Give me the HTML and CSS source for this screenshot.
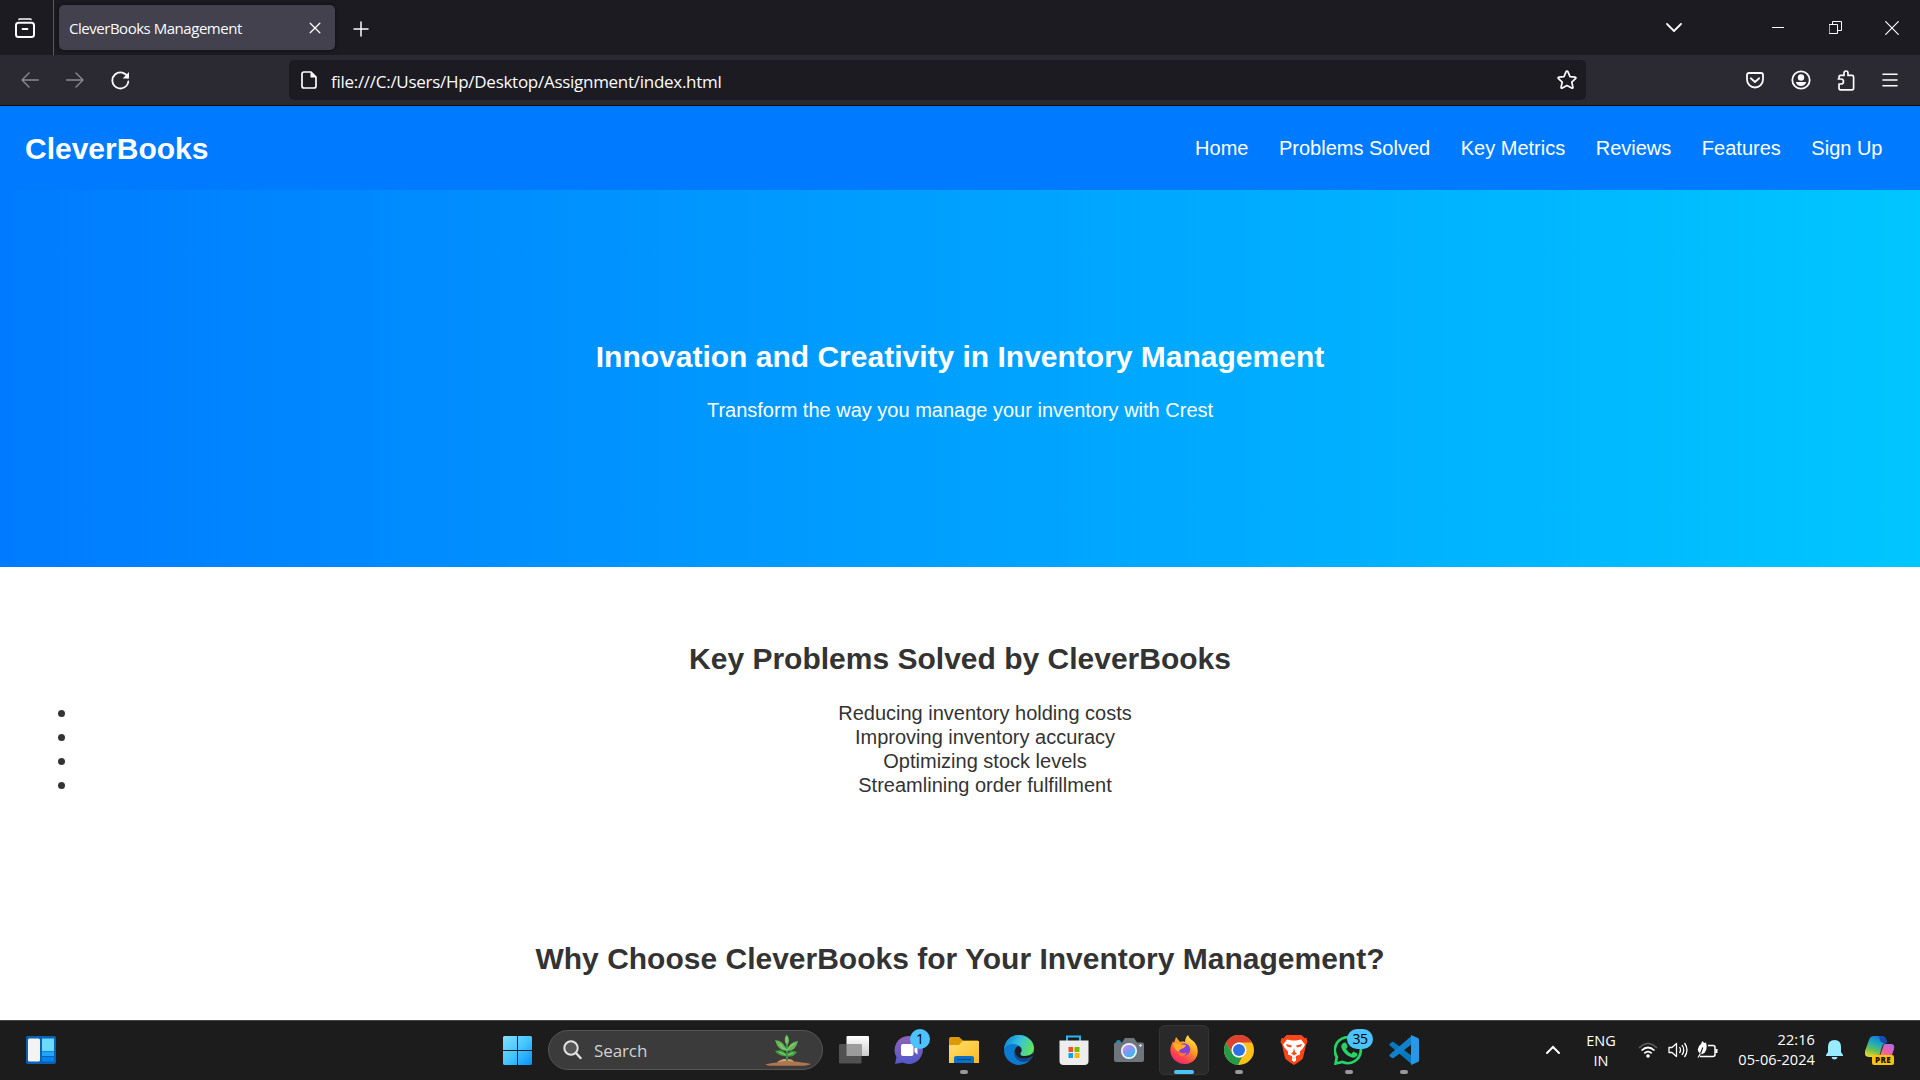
FILE: index.html
```html
<!DOCTYPE html>
<html lang="en">
<head>
<meta charset="utf-8">
<title>CleverBooks Management</title>
<link rel="stylesheet" href="styles.css">
</head>
<body>
<div class="screen">
  <div class="tabbar">
    <div class="tabview"><svg class="ico" width="20" height="20" viewBox="0 0 20 20"><path d="M4 1.5Q4 1 5 1h10q1 0 1 .5" stroke-width="1.6"/><rect x="1" y="4.8" width="18" height="14.2" rx="2.5" stroke-width="2"/><path d="M7.500 11h5" stroke-width="1.8"/></svg></div>
    <div class="tab"><span class="tab-title">CleverBooks Management</span><svg class="ico" width="12" height="12" viewBox="0 0 12 12"><path d="M1.200 1.200l9.600 9.600M10.800 1.200l-9.600 9.600" stroke-width="1.300"/></svg></div>
    <svg class="ico plus" width="16" height="16" viewBox="0 0 16 16"><path d="M8 1v14M1 8h14" stroke-width="1.5"/></svg>
    <div class="window-controls">
      <svg class="ico" width="16" height="10" viewBox="0 0 16 10"><path d="M1 1l7 7 7-7" stroke-width="1.8"/></svg>
      <svg class="ico minimise" width="12" height="12" viewBox="0 0 12 12"><path d="M0 5.500h12" stroke-width="1"/></svg>
      <svg class="ico restore" width="13" height="13" viewBox="0 0 13 13"><path d="M.5 3.500h8v9h-8zM3.500 3.500v-3h9v9h-4" stroke-width="1"/></svg>
      <svg class="ico close" width="14" height="14" viewBox="0 0 14 14"><path d="M.7.7l12.600 12.600M13.300.7L.7 13.300" stroke-width="1.200"/></svg>
    </div>
  </div>
  <div class="toolbar">
    <div class="history">
      <svg class="ico dim" width="18" height="16" viewBox="0 0 18 16"><path d="M17.500 8H1.200M8 1L1 8l7 7" stroke-width="1.400"/></svg>
      <svg class="ico dim" width="18" height="16" viewBox="0 0 18 16"><path d="M.5 8h16.300M10 1l7 7-7 7" stroke-width="1.400"/></svg>
      <svg class="ico" width="19" height="19" viewBox="0 0 19 19"><path d="M16.800 6.500A8 8 0 1 0 17.300 10.500" stroke-width="1.800"/><path d="M18 1v6.500h-6.300z" fill="#fbfbfe" stroke="none"/></svg>
    </div>
    <div class="urlbar">
      <svg class="ico" width="16" height="18" viewBox="0 0 16 18"><path d="M10 1H3Q1 1 1 3v12q0 2 2 2h10q2 0 2-2V6z" stroke-width="1.700"/><path d="M9.500.8V6.500H15.500z" fill="#fbfbfe" stroke="none"/></svg>
      <span class="url">file:///C:/Users/Hp/Desktop/Assignment/index.html</span>
      <svg class="ico star" width="20" height="20" viewBox="0 0 20 20"><path d="M10 1.200q.7 0 1 .7l2 4.700 5 .5q1.600.3.500 1.600l-3.700 3.500 1.100 4.900q.2 1.600-1.200 1l-4.700-2.500-4.700 2.500q-1.400.6-1.200-1l1.100-4.900L1.500 8.700Q.4 7.400 2 7.100l5-.5 2-4.700q.3-.7 1-.7z" stroke-width="1.700"/></svg>
    </div>
    <div class="actions">
      <svg class="ico" width="18" height="17" viewBox="0 0 18 17"><path d="M3 1h12q2 0 2 2v4.500a8 8 0 0 1-16 0V3q0-2 2-2z" stroke-width="1.800"/><path d="M4.800 6.300L9 10l4.200-3.700" stroke-width="1.800"/></svg>
      <svg class="ico" width="20" height="20" viewBox="0 0 20 20"><circle cx="10" cy="10" r="8.700" stroke-width="1.800"/><circle cx="10" cy="7.500" r="3.200" fill="#fbfbfe" stroke="none"/><path d="M4.800 12h10.400q-1 4-5.200 4t-5.200-4z" fill="#fbfbfe" stroke="none"/></svg>
      <svg class="ico" width="18" height="21" viewBox="0 0 18 21"><path d="M2 9V7q0-1.600 1.600-1.600H7V3.200q0-2.200 2-2.200t2 2.200v2.200h4q1.600 0 1.600 1.600v11q0 1.800-1.600 1.800H3.500Q2 19.800 2 18v-4h2q2.500 0 2.500-2.500T4 9H1.300z" stroke-width="1.700"/></svg>
      <svg class="ico" width="16" height="14" viewBox="0 0 16 14"><path d="M1 1.300h14M1 7h14M1 12.700h14" stroke-width="1.600"/></svg>
    </div>
  </div>

  <main class="page">
    <header class="site-header">
      <div class="brand">CleverBooks</div>
      <nav class="nav"><a>Home</a><a>Problems Solved</a><a>Key Metrics</a><a>Reviews</a><a>Features</a><a>Sign Up</a></nav>
    </header>
    <section class="hero">
      <h2>Innovation and Creativity in Inventory Management</h2>
      <p>Transform the way you manage your inventory with Crest</p>
    </section>
    <section class="block">
      <h2>Key Problems Solved by CleverBooks</h2>
      <ul>
        <li>Reducing inventory holding costs</li>
        <li>Improving inventory accuracy</li>
        <li>Optimizing stock levels</li>
        <li>Streamlining order fulfillment</li>
      </ul>
    </section>
    <section class="block">
      <h2>Why Choose CleverBooks for Your Inventory Management?</h2>
    </section>
  </main>

  <footer class="taskbar">
    <svg class="widgets" width="30" height="28" viewBox="0 0 30 28"><rect width="30" height="28" rx="2" fill="#0b62b5"/><rect x="2" y="2.500" width="12" height="23" rx="1.500" fill="#f3f3f3"/><path d="M16 2.500h12V15H16z" fill="#69dafd"/><path d="M16 15.500h12v4.500H16z" fill="#20a5fa"/><path d="M16 21h12v4.500H16z" fill="#0583ef"/></svg>
    <svg class="start" width="29" height="29" viewBox="0 0 29 29"><defs><linearGradient id="win" x1="0" y1="0" x2="29" y2="29" gradientUnits="userSpaceOnUse"><stop stop-color="#83dfff"/><stop offset=".5" stop-color="#45c6fd"/><stop offset="1" stop-color="#0791f8"/></linearGradient></defs><path d="M1 0h13v14H0V1zM15 0h13l1 1v13H15zM0 15h14v14H1l-1-1zM15 15h14v13l-1 1H15z" fill="url(#win)"/></svg>
    <div class="search">
      <svg width="19" height="20" viewBox="0 0 19 20"><circle cx="8" cy="8" r="6.700" fill="#555" stroke="#e3e3e3" stroke-width="2"/><path d="M13 13l4.500 5" stroke="#e3e3e3" stroke-width="2.400" stroke-linecap="round"/></svg>
      <span>Search</span>
      <svg class="plant" width="46" height="32" viewBox="0 0 46 32"><path d="M0 30.500q6-1.500 12-2 6-4 9-3 5-1 8 2 7 .5 17 2.500-3 1.800-10 1.800H4z" fill="#b07650"/><path d="M12 28q7-4 10-2.500 4-1 7 2-8-1-17 .5z" fill="#dda27d"/><path d="M22 27V8" stroke="#369644" stroke-width="2" fill="none"/><path d="M21.500 17Q13 17 10 6q10 1 11.500 11zM22 17Q24 8 33 7q-2 10-11 10zM21 10q-3-5 .8-9.500Q26 6 22.500 11z" fill="#67b65a"/><path d="M22 22q-8 1-12-5 9-3 12 5zM22 22q2-7 10-4-4 6-10 4z" fill="#459f45"/><path d="M22 16Q17 15 15 10M22 16q3-5 7-6M21.800 9V3M21 21l-7-3M23 21l5-2" fill="none" stroke="#9ad779" stroke-width=".9"/></svg>
    </div>
    <div class="apps">
      <div class="app"><svg width="30" height="30" viewBox="0 0 30 30"><defs><linearGradient id="tv" x1="0" y1="0" x2="0" y2="1"><stop stop-color="#fff"/><stop offset="1" stop-color="#ccc"/></linearGradient></defs><rect x="7.500" y="1" width="22.500" height="20" rx="1" fill="url(#tv)"/><rect y="9" width="22.500" height="19.500" rx="1" fill="#515151"/><path d="M7.500 9h15v12h-15z" fill="#9c9c9c"/></svg></div>
      <div class="app"><svg width="30" height="30" viewBox="0 0 30 30"><defs><linearGradient id="chat" x1="0" y1="0" x2="0" y2="1"><stop stop-color="#9062b5"/><stop offset="1" stop-color="#5059c9"/></linearGradient></defs><path d="M15 1a14 14 0 1 1-6.500 26.500L1 29l1.500-7A14 14 0 0 1 15 1z" fill="url(#chat)"/><rect x="7" y="9" width="12.500" height="12" rx="2" fill="#fff"/><path d="M20.500 13l3-2.500v9l-3-2.500z" fill="#fff"/></svg><span class="badge">1</span></div>
      <div class="app"><svg width="30" height="30" viewBox="0 0 30 30"><defs><linearGradient id="fold" x1="0" y1="0" x2="1" y2="1"><stop stop-color="#ffe071"/><stop offset="1" stop-color="#fdb91e"/></linearGradient></defs><path d="M0 4q0-2 2-2h8l4 3.500h15V14H0z" fill="#dd9a05"/><path d="M0 10h10l3.500-4H30v22H0z" fill="url(#fold)"/><path d="M5 28v-5q0-2 2-2h16q2 0 2 2v5z" fill="#0871c5"/><path d="M8 24.500h14" stroke="#06488b"/></svg><i class="mark"></i></div>
      <div class="app"><svg width="30" height="30" viewBox="0 0 30 30"><defs><linearGradient id="edge" x1="0" x2="1" y1=".2" y2=".5"><stop stop-color="#0b84d8"/><stop offset=".5" stop-color="#35c1df"/><stop offset="1" stop-color="#62e557"/></linearGradient></defs><circle cx="15" cy="15" r="15" fill="#0b7bd1"/><path d="M0 14C1 5 7 0 15 0s15 6 15 13c0 5-4 8-9 8-4 0-5.500-1.500-4-3.500 2-3 .5-6-3-7.500C9 8 3 9 0 14z" fill="url(#edge)"/><path d="M11 14c-3 7 2 13 9 13 4 0 7-3 8-5q-3 2-7 1.500c-6-.5-10-4-10-9.500z" fill="#114a8b"/><path d="M16.500 18c2-3 .5-6-2-7-3 1-4.500 4-3 7.500 1 3 4 5 9 5 4 0 7-1 8.500-3l.5-3q-3 3.500-9 3.500-5.500 0-4-3z" fill="#1c1c1c"/></svg></div>
      <div class="app"><svg width="30" height="30" viewBox="0 0 30 30"><path d="M8 7V1.500h13V7" fill="none" stroke="#29b6ef" stroke-width="2"/><path d="M.5 5.500h29V26q0 4-4 4h-21q-4 0-4-4z" fill="#ededed"/><path d="M9.500 12H14v5H9.500z" fill="#f25022"/><path d="M15.500 12h5v5h-5z" fill="#7fba00"/><path d="M9.500 18H14v5H9.500z" fill="#00a4ef"/><path d="M15.500 18h5v5h-5z" fill="#ffb900"/></svg></div>
      <div class="app"><svg width="30" height="30" viewBox="0 0 30 30"><defs><linearGradient id="lens" x1="0" y1="0" x2=".7" y2="1"><stop stop-color="#d594f7"/><stop offset=".5" stop-color="#8994f2"/><stop offset="1" stop-color="#26c1ef"/></linearGradient></defs><path d="M2 8q0-3 2.500-3T7 8z" fill="#168fcb"/><path d="M0 9q0-1.500 2-1.500h6L11 3h9l3 4.500h5q2 0 2 2V25q0 2-2 2H2q-2 0-2-2z" fill="#6d757d"/><circle cx="15" cy="16" r="8" fill="#f3f3f5"/><circle cx="15" cy="16" r="6.300" fill="url(#lens)"/><path d="M26.500 9v3M25 10.500h3" stroke="#d7dce2"/></svg></div>
      <div class="app active"><svg width="30" height="30" viewBox="0 0 30 30"><defs><linearGradient id="fox" x1=".8" y1="0" x2=".2" y2="1"><stop stop-color="#fff44f"/><stop offset=".4" stop-color="#ff9d20"/><stop offset=".75" stop-color="#ff4052"/><stop offset="1" stop-color="#e82682"/></linearGradient></defs><path d="M19 0c1 4 5 5 7 8 6 8 2 21-10 21C6 29-1 20 2 11L4 6l1 2 2-6 4 5c3-1 5 0 5 0 0-3 1-5 3-7z" fill="url(#fox)"/><circle cx="15" cy="14.500" r="6.200" fill="#8340dc"/><path d="M4 8q3-1 6 1l7 1q-1 3-5 4-2 1-2 3-5-2-6-9z" fill="#ffad25"/><path d="M9 16q5 4 9 1-2 5-6 4-3-1-3-5z" fill="#ff762c"/></svg><i class="mark wide"></i></div>
      <div class="app"><svg width="30" height="30" viewBox="0 0 30 30"><circle cx="15" cy="15" r="15" fill="#fbc116"/><path d="M2 7.500A15 15 0 0 1 28 7.500H15a7.500 7.500 0 0 0-6.500 11z" fill="#dd4132"/><path d="M2 7.500l6.500 11.200A7.500 7.500 0 0 0 18 22l-4 8A15 15 0 0 1 2 7.500z" fill="#249b4a"/><circle cx="15" cy="15" r="7.500" fill="#fff"/><circle cx="15" cy="15" r="6" fill="#2d72e4"/></svg><i class="mark"></i></div>
      <div class="app"><svg width="30" height="30" viewBox="0 0 30 30"><path d="M7.500 0h15l3 3 2-.2 1 4L27 10l-3 13q-1 2-9 7-8-5-9-7L3 10 1.500 7l1-4 2 .2z" fill="#fc4519"/><path d="M8 4.500l5 1h4l5-1 4 5-1.500 3-3.500 4v3L17 21v4.500L15 27l-2-1.500V21l-4-1.500v-3L5.500 12.500 4 9.500z" fill="#fff"/><path d="M7 9l6 1.500-1 2-4-1zM23 9l-6 1.500 1 2 4-1zM15 13l1 4 2 1.500-3 2-3-2 2-1.500zM11 21.500l4 2 4-2-4 1.500z" fill="#f94c23"/></svg></div>
      <div class="app"><svg width="30" height="30" viewBox="0 0 30 30"><path d="M2.800 22A13 13 0 1 1 8.500 27L1.600 28.500z" fill="none" stroke="#25d366" stroke-width="2.700"/><path d="M10 7.500l2 .2 1.800 4-1.700 2.200q2 3.500 5.300 5l2-2.300 4 1.900q.5 1.300-.7 2.700-2.400 2.300-6 .9-6-2-9-8.500-1.600-4 2.300-6.100z" fill="#25d366"/></svg><span class="badge pill">35</span><i class="mark"></i></div>
      <div class="app"><svg width="30" height="30" viewBox="0 0 30 30"><path d="M1 8.500l2-1.500q1-.5 2 .2L23 21v8.500L.8 10.500q-1-1 .2-2z" fill="#0878bd"/><path d="M1 21.500l2 1.500q1 .5 2-.2L23 9V.5L.8 19.500q-1 1 .2 2z" fill="#1181ce"/><path d="M22 0l7 3q1 .5 1 1.500v21q0 1-1 1.500l-7 3z" fill="#2797e8"/></svg><i class="mark"></i></div>
    </div>
    <div class="tray">
      <svg class="up" width="16" height="10" viewBox="0 0 16 10"><path d="M2 8l6-6 6 6" fill="none" stroke="#fff" stroke-width="2" stroke-linecap="round"/></svg>
      <div class="lang"><span>ENG</span><span>IN</span></div>
      <svg class="wifi" width="20" height="16" viewBox="0 0 20 16"><path d="M1 6q9-9 18 0" fill="none" stroke="#606060" stroke-width="1.400"/><path d="M3.500 8.500q6.500-6 13 0M6.300 11.300q3.700-3.500 7.400 0" fill="none" stroke="#fff" stroke-width="1.700"/><circle cx="10" cy="14" r="1.800" fill="#fff"/></svg>
      <svg class="sound" width="20" height="18" viewBox="0 0 20 18"><path d="M1 6.500h3l4.500-4v13l-4.500-4H1zM11.500 6q2 3 0 6M14 4q3.500 5 0 10M16.500 2q5 7 0 14" fill="none" stroke="#fff" stroke-width="1.300" stroke-linejoin="round"/></svg>
      <svg class="battery" width="21" height="19" viewBox="0 0 21 19"><path d="M11 4.500h5q2 0 2 2v7q0 2-2 2H3" fill="none" stroke="#fff" stroke-width="1.500"/><path d="M18.500 8H20.500v4h-2z" fill="#fff"/><path d="M5.500 0l1.700 2L9 1.500q1.200 3 .3 7Q8 12.500 5 13 1 12 .8 8.500 1 5 4 3z" fill="#fff"/><path d="M.8 16q3.700-4 5-9.500" fill="none" stroke="#1c1c1c" stroke-width="1.100"/><path d="M1 16.500l2.500-4" stroke="#fff" stroke-width="1.200"/></svg>
      <div class="clock"><span>22:16</span><span>05-06-2024</span></div>
      <svg class="bell" width="17" height="20" viewBox="0 0 17 20"><path d="M8.500 0Q15 0 15 7v5l2 3v1H0v-1l2-3V7q0-7 6.500-7zM5.500 17h6q-.5 2.500-3 2.500T5.500 17z" fill="#99ebff"/></svg>
      <div class="copilot"><svg width="30" height="28" viewBox="0 0 30 28"><defs><linearGradient id="cpl" x1=".7" y1="0" x2=".3" y2="1"><stop stop-color="#1673df"/><stop offset=".4" stop-color="#1daeb7"/><stop offset=".7" stop-color="#72bd52"/><stop offset="1" stop-color="#e3d72d"/></linearGradient><linearGradient id="cpr" x1="1" y1="0" x2="0" y2="1"><stop stop-color="#a96af2"/><stop offset=".5" stop-color="#ec62a1"/><stop offset="1" stop-color="#ff9e55"/></linearGradient></defs><path d="M9 0h8q4 0 5 7-4 0-5 4l-3 10H4q-5 0-4-6L4 4q1-4 5-4z" fill="url(#cpl)"/><path d="M14 0h3q4 0 5 7h-4q-3 0-4-7z" fill="#164bb0"/><path d="M20 8h6q4 0 3 5l-3 9H11q4-1 5-5l2-6q.5-3 2-3z" fill="url(#cpr)"/></svg><span class="pre">PRE</span></div>
    </div>
  </footer>
</div>
</body>
</html>
```

FILE: styles.css
```css
* { box-sizing: border-box; }
body { margin: 0; font-family: "Liberation Sans", Arial, sans-serif; }
svg { display: block; flex: none; }
.screen { width: 1920px; height: 1080px; display: flex; flex-direction: column; overflow: hidden; background: #fff; }
.ico { fill: none; stroke: #fbfbfe; stroke-linecap: round; stroke-linejoin: round; }
.dim { stroke: #8b8a91; }

.tabbar { flex: none; height: 55px; display: flex; align-items: center; background: #1c1b22; }
.tabview { width: 54px; height: 55px; padding: 18px 0 0 15px; border-right: 1px solid #5a5960; }
.tab { width: 276px; height: 45px; margin-left: 5px; padding: 0 14px 0 10px; display: flex; align-items: center; justify-content: space-between; border-radius: 5px; background: #42414d; box-shadow: 0 0 4px #0d0c12; }
.tab-title { font: 15px/20px "Open Sans", sans-serif; color: #fbfbfe; white-space: nowrap; letter-spacing: -.47px; padding-top: 1px; }
.plus { margin: 2px 0 0 18px; }
.window-controls { margin-left: auto; padding-right: 21px; display: flex; align-items: center; }
.minimise { margin-left: 90px; }
.restore { margin-left: 45px; }
.close { margin-left: 43px; }

.toolbar { flex: none; height: 51px; display: flex; align-items: center; background: #2b2a33; border-bottom: 1px solid #0c0c0d; }
.history { width: 289px; padding-left: 21px; display: flex; align-items: center; gap: 27px; }
.urlbar { width: 1297px; height: 40px; padding: 0 9px 0 12px; display: flex; align-items: center; border-radius: 5px; background: #1c1b22; }
.url { margin-left: 14px; padding-top: 3px; font: 17px/22px "Open Sans", sans-serif; color: #fbfbfe; white-space: nowrap; letter-spacing: -.28px; }
.star { margin-left: auto; }
.actions { margin-left: auto; padding-right: 22px; display: flex; align-items: center; gap: 26.600px; }

.page { flex: 1; min-height: 0; overflow: hidden; font-size: 20px; line-height: 24px; color: #333; }
.page h2 { margin: 0 0 25px; font-size: 30px; line-height: 34px; }
.site-header { height: 84px; padding: 0 37.500px 0 25px; display: flex; align-items: center; justify-content: space-between; background: #007bff; color: #fff; }
.brand { padding-top: 2px; font-size: 30px; line-height: 34px; font-weight: bold; }
.nav { display: flex; gap: 30.560px; }
.hero { height: 377px; padding-top: 150px; text-align: center; color: #fff; background: linear-gradient(to right, #007bff, #00c6ff); }
.hero p { margin: 0; line-height: 22px; }
.block { height: 300px; padding: 75px 25px 0; text-align: center; }
.block ul { margin: 0; padding-left: 50px; list-style: none; }
.block li { display: grid; grid-template-columns: 0 1fr; align-items: center; }
.block li::before { content: ""; width: 7px; height: 7px; margin: 1px 0 0 -17px; border-radius: 50%; background: #333; }

.taskbar { flex: none; height: 60px; display: flex; align-items: center; background: #1c1c1c; border-top: 1px solid #454545; font-family: "Open Sans", sans-serif; }
.widgets { margin: 0 0 1px 26px; }
.start { margin-left: 447px; }
.search { width: 275px; height: 40px; margin: 0 0 1px 16px; padding: 0 11px 0 14px; display: flex; align-items: center; border: 1px solid #555; border-radius: 20px; background: #3b3b3b; color: #d2d2d2; font-size: 17px; }
.search span { margin-left: 12px; letter-spacing: -.1px; }
.plant { margin-left: auto; }
.apps { margin: 0 0 1px 6px; display: flex; gap: 5px; }
.app { position: relative; width: 50px; height: 50px; display: flex; align-items: center; justify-content: center; border-radius: 5px; }
.app.active { background: #292929; border: 1px solid #343434; }
.mark { position: absolute; left: 21px; bottom: 1px; width: 8px; height: 4px; border-radius: 2px; background: #999; }
.mark.wide { left: 14px; bottom: 0; width: 20px; background: #4cc2ff; }
.badge { position: absolute; left: 26px; top: 4px; min-width: 20px; height: 20px; border-radius: 10px; background: #4cc2ff; color: #000; font-size: 14px; line-height: 20px; text-align: center; }
.badge.pill { left: 23px; width: 26px; letter-spacing: -.5px; }
.tray { flex: 1; padding: 0 25px 1px 0; display: flex; align-items: center; justify-content: flex-end; color: #fff; font-size: 14.500px; line-height: 20px; }
.lang { width: 40px; margin-left: 20px; padding-top: 1px; display: flex; flex-direction: column; text-align: center; }
.wifi { margin-left: 17px; }
.sound { margin-left: 10px; }
.battery { margin-left: 9px; }
.clock { width: 88px; margin-left: 9px; display: flex; flex-direction: column; text-align: right; white-space: nowrap; letter-spacing: .1px; }
.bell { margin-left: 11px; }
.copilot { position: relative; margin-left: 22px; }
.pre { position: absolute; left: 7px; top: 19px; width: 22px; height: 10px; border-radius: 2px; background: #fec10c; color: #171300; font-size: 8px; font-weight: 800; line-height: 10px; text-align: center; letter-spacing: .3px; }
```
